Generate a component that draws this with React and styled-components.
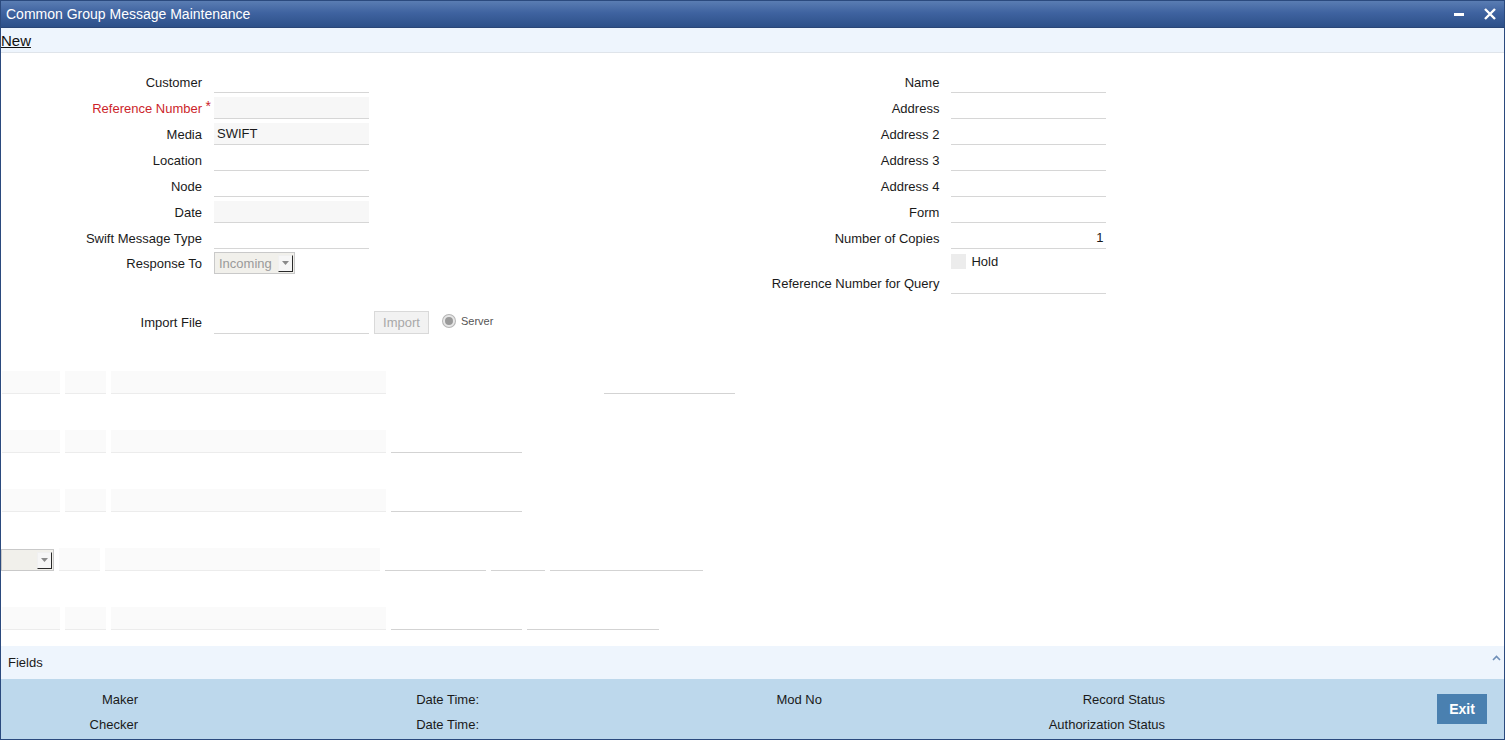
import styled, { createGlobalStyle } from "styled-components";

const GlobalStyle = createGlobalStyle`
  html, body {
    margin: 0;
    padding: 0;
    height: 100%;
    background: #ffffff;
  }
  body {
    font-family: "Liberation Sans", Arial, sans-serif;
    font-size: 13px;
    color: #1a1a1a;
  }
  #root {
    height: 100%;
  }
`;

const LEFT_FIELDS = [
  { label: "Customer" },
  { label: "Reference Number", required: true, shaded: true },
  { label: "Media", value: "SWIFT", shaded: true },
  { label: "Location" },
  { label: "Node" },
  { label: "Date", shaded: true },
  { label: "Swift Message Type" },
];

const RIGHT_FIELDS = [
  { label: "Name" },
  { label: "Address" },
  { label: "Address 2" },
  { label: "Address 3" },
  { label: "Address 4" },
  { label: "Form" },
  { label: "Number of Copies", value: "1", right: true },
];

function Arrow() {
  return (
    <svg width="7" height="4" viewBox="0 0 7 4">
      <path d="M0 0H7L3.5 4Z" fill="#8a8a8a" />
    </svg>
  );
}

function Dropdown({ value, width }) {
  return (
    <Select $width={width}>
      <SelectText>{value}</SelectText>
      <SelectButton>
        <Arrow />
      </SelectButton>
    </Select>
  );
}

function App() {
  return (
    <>
      <GlobalStyle />
      <Window>
        <TitleBar>
          <Title>Common Group Message Maintenance</Title>
          <TitleIcons>
            <svg width="10" height="10" viewBox="0 0 10 10">
              <rect x="0" y="4" width="10" height="3" fill="#fff" />
            </svg>
            <svg width="12" height="12" viewBox="0 0 12 12">
              <path d="M1 1L11 11M11 1L1 11" stroke="#fff" strokeWidth="2.4" />
            </svg>
          </TitleIcons>
        </TitleBar>

        <Toolbar>
          <ToolLink>New</ToolLink>
        </Toolbar>

        <Content>
          <Columns>
            <Column>
              {LEFT_FIELDS.map((f) => (
                <FieldRow key={f.label} $labelWidth={201}>
                  <Label $required={f.required}>
                    {f.label}
                    {f.required && <Star>*</Star>}
                  </Label>
                  <Input $shaded={f.shaded}>{f.value}</Input>
                </FieldRow>
              ))}
              <FieldRow $labelWidth={201} $shift={-1}>
                <Label>Response To</Label>
                <Dropdown value="Incoming" width={81} />
              </FieldRow>
              <ImportRow>
                <FieldRow $labelWidth={201}>
                  <Label>Import File</Label>
                  <Input />
                </FieldRow>
                <ImportButton>Import</ImportButton>
                <Radio>
                  <RadioDot />
                  Server
                </Radio>
              </ImportRow>
            </Column>

            <Column $offset>
              {RIGHT_FIELDS.map((f) => (
                <FieldRow key={f.label} $labelWidth={369}>
                  <Label>{f.label}</Label>
                  <Input $right={f.right}>{f.value}</Input>
                </FieldRow>
              ))}
              <FieldRow $labelWidth={369} $shift={-3}>
                <span />
                <Check>
                  <CheckBox />
                  Hold
                </Check>
              </FieldRow>
              <FieldRow $labelWidth={369} $shift={-4}>
                <Label>Reference Number for Query</Label>
                <Input />
              </FieldRow>
            </Column>
          </Columns>

          <HiddenGrid>
            <GridRow>
              <Box $w={58} />
              <Box $w={41} />
              <Box $w={275} />
              <Line $w={131} $gap={213} />
            </GridRow>
            <GridRow>
              <Box $w={58} />
              <Box $w={41} />
              <Box $w={275} />
              <Line $w={131} />
            </GridRow>
            <GridRow>
              <Box $w={58} />
              <Box $w={41} />
              <Box $w={275} />
              <Line $w={131} />
            </GridRow>
            <GridRow $flush>
              <Dropdown value="" width={53} />
              <Box $w={41} />
              <Box $w={275} />
              <Line $w={101} />
              <Line $w={54} />
              <Line $w={153} />
            </GridRow>
            <GridRow>
              <Box $w={58} />
              <Box $w={41} />
              <Box $w={275} />
              <Line $w={131} />
              <Line $w={132} />
            </GridRow>
          </HiddenGrid>
        </Content>

        <FieldsBar>
          <span>Fields</span>
          <svg width="9" height="6" viewBox="0 0 9 6">
            <path d="M1 5L4.5 1.5L8 5" stroke="#6f8fb8" strokeWidth="1.6" fill="none" />
          </svg>
        </FieldsBar>

        <Footer>
          <FooterGrid>
            <FooterLabel>Maker</FooterLabel>
            <FooterLabel>Date Time:</FooterLabel>
            <FooterLabel>Mod No</FooterLabel>
            <FooterLabel>Record Status</FooterLabel>
            <FooterLabel>Checker</FooterLabel>
            <FooterLabel>Date Time:</FooterLabel>
            <FooterLabel />
            <FooterLabel>Authorization Status</FooterLabel>
          </FooterGrid>
          <ExitButton>Exit</ExitButton>
        </Footer>
      </Window>
    </>
  );
}

export default App;

const Window = styled.div`
  display: flex;
  flex-direction: column;
  height: 740px;
  box-sizing: border-box;
  border: 1px solid #2b4a7e;
  border-top: none;
  overflow: hidden;
`;

const TitleBar = styled.div`
  flex: none;
  display: flex;
  align-items: center;
  justify-content: space-between;
  height: 28px;
  box-sizing: border-box;
  padding: 0 9px 1px 6px;
  background: linear-gradient(#5a7db3 0%, #3f63a0 45%, #2d5089 100%);
  border-top: 1px solid #2b4a7e;
  border-bottom: 1px solid #2a4677;
  margin: 0 -1px;
`;

const Title = styled.div`
  color: #ffffff;
  font-size: 14px;
`;

const TitleIcons = styled.div`
  display: flex;
  align-items: center;
  gap: 20px;
`;

const Toolbar = styled.div`
  flex: none;
  height: 24px;
  display: flex;
  align-items: center;
  background: #eef5fd;
  border-bottom: 1px solid #dfe4ea;
`;

const ToolLink = styled.a`
  font-size: 15px;
  color: #111;
  text-decoration: underline;
  cursor: pointer;
`;

const Content = styled.div`
  flex: 1;
  min-height: 0;
  overflow: hidden;
  padding-top: 18px;
`;

const Columns = styled.div`
  display: flex;
`;

const Column = styled.div`
  display: flex;
  flex-direction: column;
  gap: 4px;
  margin-left: ${(p) => (p.$offset ? "77px" : "0")};
`;

const FieldRow = styled.div`
  display: grid;
  grid-template-columns: ${(p) => p.$labelWidth}px 155px;
  column-gap: 12px;
  align-items: center;
  height: 22px;
  margin-top: ${(p) => (p.$shift ? `${p.$shift}px` : "0")};
`;

const Label = styled.label`
  text-align: right;
  color: ${(p) => (p.$required ? "#cc1f2b" : "#1a1a1a")};
  white-space: nowrap;
  position: relative;
`;

const Star = styled.span`
  position: absolute;
  right: -9px;
  top: -3px;
  color: #cc1f2b;
  font-size: 14px;
`;

const Input = styled.div`
  height: 22px;
  box-sizing: border-box;
  padding: 0 3px;
  display: flex;
  align-items: center;
  justify-content: ${(p) => (p.$right ? "flex-end" : "flex-start")};
  background: ${(p) => (p.$shaded ? "#f7f7f7" : "#ffffff")};
  border-bottom: 1px solid #d6d6d6;
  color: #1a1a1a;
`;

const Select = styled.div`
  width: ${(p) => p.$width}px;
  height: 22px;
  box-sizing: border-box;
  display: flex;
  align-items: center;
  justify-content: space-between;
  padding: 0 1px 0 4px;
  background: #f1f0eb;
  border: 1px solid #c9c9c9;
`;

const SelectText = styled.span`
  color: #9a9a9a;
`;

const SelectButton = styled.span`
  width: 15px;
  height: 17px;
  box-sizing: border-box;
  display: flex;
  align-items: center;
  justify-content: center;
  background: #f6f6f6;
  border: 1px solid #f0f0f0;
  border-right-color: #2a2a2a;
  border-bottom-color: #2a2a2a;
`;

const ImportRow = styled.div`
  display: flex;
  align-items: center;
  margin-top: 33px;
`;

const ImportButton = styled.button`
  margin-left: 5px;
  width: 55px;
  height: 23px;
  font-family: inherit;
  font-size: 13px;
  color: #a8a8a8;
  background: #f2f2f2;
  border: 1px solid #d9d9d9;
  padding: 0;
`;

const Radio = styled.span`
  display: flex;
  align-items: center;
  gap: 6px;
  margin-left: 14px;
  margin-top: -4px;
  font-size: 11px;
  color: #555;
`;

const RadioDot = styled.span`
  width: 8px;
  height: 8px;
  border-radius: 50%;
  background: #9a9a9a;
  border: 2px solid #e6e6e6;
  box-shadow: 0 0 0 1px #b5b5b5;
`;

const Check = styled.span`
  display: flex;
  align-items: center;
  gap: 5px;
`;

const CheckBox = styled.span`
  width: 15px;
  height: 15px;
  background: #ececec;
`;

const HiddenGrid = styled.div`
  display: flex;
  flex-direction: column;
  gap: 36px;
  margin-top: 37px;
`;

const GridRow = styled.div`
  display: flex;
  align-items: flex-end;
  gap: 5px;
  height: 23px;
  padding-left: ${(p) => (p.$flush ? "0" : "1px")};
`;

const Box = styled.div`
  width: ${(p) => p.$w}px;
  height: 23px;
  box-sizing: border-box;
  background: #fafafa;
  border-bottom: 1px solid #ececec;
`;

const Line = styled.div`
  width: ${(p) => p.$w}px;
  height: 23px;
  box-sizing: border-box;
  border-bottom: 1px solid #d3d3d3;
  margin-left: ${(p) => (p.$gap ? `${p.$gap}px` : "0")};
`;

const FieldsBar = styled.div`
  flex: none;
  height: 33px;
  box-sizing: border-box;
  display: flex;
  align-items: center;
  justify-content: space-between;
  padding: 0 3px 0 7px;
  background: #eef5fd;
  svg {
    margin-top: -10px;
  }
`;

const Footer = styled.div`
  flex: none;
  height: 60px;
  display: flex;
  align-items: center;
  background: #bdd8ec;
`;

const FooterGrid = styled.div`
  display: grid;
  grid-template-columns: 137px 341px 343px 343px;
  grid-auto-rows: 25px;
  align-items: center;
  margin-top: 5px;
`;

const FooterLabel = styled.div`
  text-align: right;
  color: #1a1a1a;
`;

const ExitButton = styled.button`
  margin-left: auto;
  margin-right: 17px;
  width: 50px;
  height: 30px;
  margin-top: -1px;
  font-family: inherit;
  font-size: 14px;
  font-weight: bold;
  color: #ffffff;
  background: #4a80b0;
  border: none;
  padding: 0;
`;
